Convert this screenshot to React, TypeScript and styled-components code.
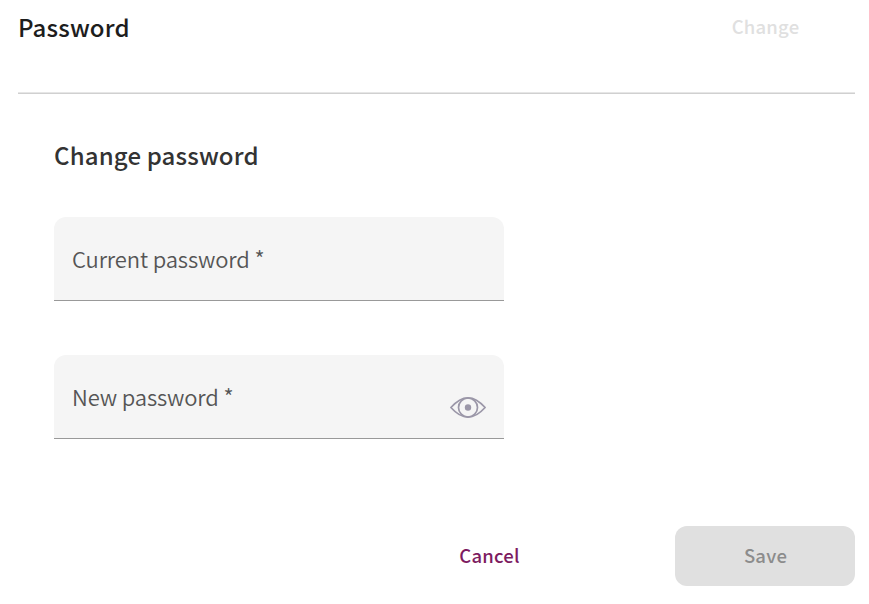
import styled, { createGlobalStyle } from "styled-components";

const GlobalStyle = createGlobalStyle`
  * { box-sizing: border-box; }
  body {
    margin: 0;
    background: #fff;
    font-family: "Noto Sans CJK SC", "Source Sans Pro", "Noto Sans", sans-serif;
  }
  button, input { font-family: inherit; }
`;

const Page = styled.main`
  display: flex;
  flex-direction: column;
  width: 869px;
  height: 604px;
  padding: 0 14px 18px 18px;
  overflow: hidden;
`;

const Header = styled.header`
  display: flex;
  justify-content: space-between;
  height: 94px;
  padding-top: 9px;
  border-bottom: 1px solid #d0d0d0;
  box-shadow: inset 0 -1px #e6e6e6;
`;

const Title = styled.h1`
  margin: 0;
  font-size: 24px;
  line-height: 36px;
  font-weight: 500;
  letter-spacing: 0.15px;
  color: #1d1d1d;
`;

const Button = styled.button<{ $kind: "ghost" | "link" | "filled" }>`
  width: 180px;
  height: ${(p) => (p.$kind === "ghost" ? 34 : 60)}px;
  padding: 0 0 2px 1px;
  border: 0;
  border-radius: 12px;
  font-size: 18.5px;
  line-height: 34px;
  font-weight: 500;
  letter-spacing: 0.2px;
  background: ${(p) => (p.$kind === "filled" ? "#e0e0e0" : "transparent")};
  color: ${(p) => ({ ghost: "#e0e0e0", link: "#7d1b61", filled: "#8c8c8c" })[p.$kind]};
`;

const Form = styled.form`
  display: flex;
  flex: 1;
  flex-direction: column;
  padding-top: 43px;
`;

const Subtitle = styled.h2`
  margin: 0 0 44px 36px;
  font-size: 24px;
  line-height: 36px;
  font-weight: 500;
  letter-spacing: 0.15px;
  color: #333;
`;

const Field = styled.label`
  display: flex;
  justify-content: space-between;
  width: 450px;
  height: 84px;
  margin: 0 0 54px 36px;
  padding: 23px 18px 0;
  border-bottom: 1px solid #999;
  border-radius: 12px 12px 0 0;
  background: #f5f5f5;
`;

const Label = styled.span`
  font-size: 22px;
  line-height: 36px;
  font-weight: 350;
  letter-spacing: -0.14px;
  color: #555;
`;

const Eye = styled.svg`
  width: 36px;
  height: 23px;
  margin-top: 18px;
`;

const Actions = styled.footer`
  display: flex;
  justify-content: flex-end;
  gap: 96px;
  margin-top: auto;
`;

export default function App() {
  return (
    <>
      <GlobalStyle />
      <Page>
        <Header>
          <Title>Password</Title>
          <Button $kind="ghost" disabled>Change</Button>
        </Header>
        <Form>
          <Subtitle>Change password</Subtitle>
          <Field><Label>Current password *</Label></Field>
          <Field>
            <Label>New password *</Label>
            <Eye viewBox="0 0 36 23" fill="none" stroke="#9b97a8" strokeWidth="1.7">
              <path d="M.9 11.5C6 5.8 11.5 1.8 18 1.8S30 5.8 35.1 11.5C30 17.2 24.5 21.2 18 21.2S6 17.2.9 11.5Z" strokeLinejoin="round" />
              <circle cx="18" cy="11.5" r="9.5" />
              <circle cx="18" cy="11.5" r="3.2" fill="#9b97a8" stroke="none" />
            </Eye>
          </Field>
          <Actions>
            <Button $kind="link" type="button">Cancel</Button>
            <Button $kind="filled" disabled>Save</Button>
          </Actions>
        </Form>
      </Page>
    </>
  );
}
